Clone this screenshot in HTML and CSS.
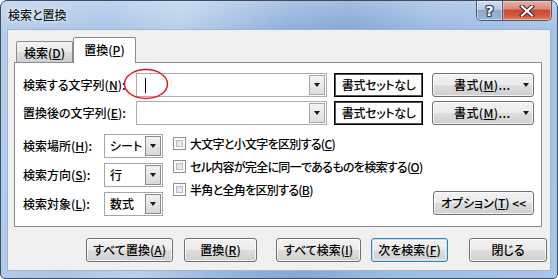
FILE: index.html
```html
<!DOCTYPE html>
<html lang="ja">
<head>
<meta charset="utf-8">
<title>検索と置換</title>
<link rel="stylesheet" href="styles.css">
</head>
<body>
<div class="window">
  <div class="titlebar">
    <span class="title">検索と置換</span>
    <div class="caption-btns">
      <div class="cap help"><span>?</span></div>
      <div class="cap close">
        <svg width="16" height="12" viewBox="0 0 16 12">
          <path d="M3 1.5 L13 10.5 M13 1.5 L3 10.5" stroke="#3a2a28" stroke-width="4.2" stroke-linecap="square" fill="none"/>
          <path d="M3 1.5 L13 10.5 M13 1.5 L3 10.5" stroke="#ffffff" stroke-width="2.2" stroke-linecap="square" fill="none"/>
        </svg>
      </div>
    </div>
  </div>
  <div class="client">
    <div class="tabs">
      <div class="tab">検索(<u>D</u>)</div>
      <div class="tab active">置換(<u>P</u>)</div>
    </div>
    <div class="panel">
      <div class="rows">
        <div class="row">
          <span class="lbl">検索する文字列(<u>N</u>):</span>
          <div class="combo">
            <div class="field"><span class="caret"></span></div>
            <div class="drop"><i class="tri"></i></div>
          </div>
          <div class="fmtbox">書式セットなし</div>
          <div class="btn fmtbtn"><span class="fmtlbl">書式(<u>M</u>)...</span><i class="tri"></i></div>
        </div>
        <div class="row">
          <span class="lbl">置換後の文字列(<u>E</u>):</span>
          <div class="combo">
            <div class="field"></div>
            <div class="drop"><i class="tri"></i></div>
          </div>
          <div class="fmtbox">書式セットなし</div>
          <div class="btn fmtbtn"><span class="fmtlbl">書式(<u>M</u>)...</span><i class="tri"></i></div>
        </div>
      </div>
      <div class="options">
        <div class="scopes">
          <div class="scope"><span class="slbl">検索場所(<u>H</u>):</span><div class="select"><span class="sval">シート</span><span class="sdrop"><i class="tri"></i></span></div></div>
          <div class="scope"><span class="slbl">検索方向(<u>S</u>):</span><div class="select"><span class="sval">行</span><span class="sdrop"><i class="tri"></i></span></div></div>
          <div class="scope"><span class="slbl">検索対象(<u>L</u>):</span><div class="select"><span class="sval">数式</span><span class="sdrop"><i class="tri"></i></span></div></div>
        </div>
        <div class="checks">
          <div class="check"><span class="box"></span><span>大文字と小文字を区別する(<u>C</u>)</span></div>
          <div class="check"><span class="box"></span><span>セル内容が完全に同一であるものを検索する(<u>O</u>)</span></div>
          <div class="check"><span class="box"></span><span>半角と全角を区別する(<u>B</u>)</span></div>
        </div>
        <div class="optside"><div class="btn optbtn">オプション(<u>T</u>) &lt;&lt;</div></div>
      </div>
    </div>
    <div class="actions">
      <div class="btn act act-all">すべて置換(<u>A</u>)</div>
      <div class="btn act act-rep">置換(<u>R</u>)</div>
      <div class="btn act act-findall">すべて検索(<u>I</u>)</div>
      <div class="btn act act-next default">次を検索(<u>F</u>)</div>
      <div class="btn act act-close">閉じる</div>
    </div>
  </div>
  <svg class="annot" width="46" height="32" viewBox="0 0 46 32">
    <ellipse cx="23" cy="16" rx="21.5" ry="14.5" fill="none" stroke="#e8141c" stroke-width="1.5"/>
  </svg>
</div>
</body>
</html>
```

FILE: styles.css
```css
* { box-sizing: border-box; margin: 0; padding: 0; }
html, body { width: 558px; height: 279px; overflow: hidden; }
body {
  font-family: "Noto Sans CJK JP", "Meiryo UI", sans-serif;
  font-size: 12px;
  font-weight: 500;
  color: #000;
  font-feature-settings: "palt";
  background: #ffffff;
  white-space: nowrap;
}
u { text-decoration: underline; text-underline-offset: 1px; text-decoration-thickness: 1px; }

.window {
  position: relative;
  width: 558px;
  height: 279px;
  border: 1px solid #3c4d63;
  border-radius: 7px 7px 5px 5px;
  background:
    linear-gradient(to bottom, rgba(255,255,255,0.25), rgba(255,255,255,0) 28px),
    linear-gradient(100deg, #b7cfea 0%, #aac6e8 18%, #b9d1ec 30%, #90b1dc 48%, #86a8d6 58%, #9dbce3 72%, #a9c6e9 100%);
  display: flex;
  flex-direction: column;
  overflow: hidden;
}

.titlebar {
  height: 28px;
  display: flex;
  align-items: flex-start;
  padding-left: 7px;
}
.title {
  line-height: 1;
  margin-top: 8px;
  font-size: 12px;
  color: #101820;
  text-shadow: 0 0 5px rgba(255,255,255,0.9), 0 0 2px rgba(255,255,255,0.9);
}
.caption-btns {
  margin-left: auto;
  margin-right: 5px;
  display: flex;
  height: 20px;
  border: 1px solid #4a5a70;
  border-top: none;
  border-radius: 0 0 5px 5px;
  overflow: hidden;
}
.cap {
  height: 19px;
  display: flex;
  align-items: center;
  justify-content: center;
}
.help {
  width: 26px;
  border-right: 1px solid #4a5a70;
  background: linear-gradient(#d3e0ef 0%, #b3c7e0 45%, #8ea9cd 50%, #9cb5d6 100%);
  box-shadow: inset 0 0 0 1px rgba(255,255,255,0.45);
}
.help span {
  font-family: "DejaVu Sans", sans-serif;
  font-weight: bold;
  font-size: 14px;
  line-height: 1;
  color: #fff;
  text-shadow: -1px 0 #34445a, 1px 0 #34445a, 0 -1px #34445a, 0 1px #34445a, 1px 1px #34445a, -1px -1px #34445a, 1px -1px #34445a, -1px 1px #34445a;
}
.close {
  width: 48px;
  background: linear-gradient(#eab1a6 0%, #db8a7b 40%, #c94a36 50%, #d15a42 80%, #e48a6e 100%);
  box-shadow: inset 0 0 0 1px rgba(255,220,210,0.45);
}

.client {
  margin: 0 6px;
  height: 242px;
  border: 1px solid #a3b4ca;
  background: #f0f0f0;
  display: flex;
  flex-direction: column;
}

.tabs {
  display: flex;
  align-items: flex-end;
  height: 25px;
  margin-top: 7px;
  margin-left: 8px;
}
.tab {
  height: 21px;
  width: 57px;
  border: 1px solid #898c95;
  border-bottom: none;
  border-radius: 2px 2px 0 0;
  background: linear-gradient(#f3f3f3 0%, #ebebeb 45%, #dddddd 50%, #cfcfcf 100%);
  display: flex;
  align-items: center;
  justify-content: center;
  line-height: 1;
  padding-top: 1px;
}
.tab.active {
  width: 63px;
  height: 26px;
  margin-bottom: -1px;
  background: #ffffff;
  position: relative;
  z-index: 1;
  padding-top: 0;
  padding-bottom: 2px;
}

.panel {
  margin-left: 6px;
  width: 528px;
  height: 165px;
  border: 1px solid #898c95;
  background: #ffffff;
  padding: 10px 7px 0 8px;
  display: flex;
  flex-direction: column;
}
.rows { display: flex; flex-direction: column; gap: 4px; }
.row { display: flex; align-items: center; height: 24px; }
.lbl { width: 113px; line-height: 1; flex-shrink: 0; }
.combo {
  width: 192px;
  height: 24px;
  border: 1px solid #abadb3;
  background: #fff;
  display: flex;
  padding: 1px;
}
.field { flex: 1; display: flex; align-items: center; padding-left: 7px; }
.caret { width: 1px; height: 15px; background: #000; }
.drop {
  width: 16px;
  border: 1px solid #a7a7a7;
  background: linear-gradient(#f4f4f4, #dedede);
  display: flex;
  align-items: center;
  justify-content: center;
}
.tri {
  display: block;
  width: 0;
  height: 0;
  border-left: 3.5px solid transparent;
  border-right: 3.5px solid transparent;
  border-top: 4px solid #1a1a1a;
}
.fmtbox {
  margin-left: 7px;
  width: 89px;
  height: 24px;
  border: 1px solid #000;
  box-shadow: inset 0 0 0 1px #555;
  display: flex;
  align-items: center;
  justify-content: center;
  line-height: 1;
  background: #fff;
  letter-spacing: -0.3px;
}
.btn {
  height: 24px;
  border: 1px solid #707070;
  border-radius: 3px;
  background: linear-gradient(#f2f2f2 0%, #ebebeb 48%, #dddddd 52%, #cfcfcf 100%);
  box-shadow: inset 0 0 0 1px rgba(255,255,255,0.75);
  display: flex;
  align-items: center;
  justify-content: center;
  line-height: 1;
  flex-shrink: 0;
}
.fmtbtn {
  margin-left: 9px;
  width: 102px;
  justify-content: flex-start;
  padding-left: 21px;
}
.fmtbtn .fmtlbl { flex: 1; letter-spacing: 0.4px; }
.fmtbtn .tri { margin-right: 4px; }

.options { display: flex; margin-top: 7px; }
.scopes { display: flex; flex-direction: column; gap: 5px; padding-top: 2px; flex-shrink: 0; }
.scope { display: flex; align-items: center; height: 24px; }
.slbl { width: 81px; line-height: 1; }
.select {
  width: 59px;
  height: 24px;
  border: 1px solid #a5a5a5;
  background: #fff;
  display: flex;
  padding: 1px;
}
.sval { flex: 1; display: flex; align-items: center; padding-left: 4px; line-height: 1; }
.sdrop {
  width: 16px;
  border: 1px solid #8c8c8c;
  background: linear-gradient(#f2f2f2, #d8d8d8);
  display: flex;
  align-items: center;
  justify-content: center;
}
.checks { margin-left: 10px; display: flex; flex-direction: column; flex-shrink: 0; }
.check { height: 23px; display: flex; align-items: center; line-height: 1; letter-spacing: -0.7px; }
.box {
  width: 13px;
  height: 13px;
  border: 1px solid #8e8f8f;
  margin-right: 4px;
  display: block;
  flex-shrink: 0;
  box-shadow: inset 0 0 0 2px #fdfdfd, inset 0 0 0 3px #b9bcc2;
  background: linear-gradient(135deg, #d6d8dc, #f6f6f6);
}
.optside { margin-left: auto; display: flex; align-items: flex-end; padding-bottom: 1px; }
.optbtn { width: 101px; }

.actions { display: flex; margin-top: 11px; padding-left: 78px; }
.act { width: 87px; }
.act-rep { margin-left: 11px; width: 73px; }
.act-findall { margin-left: 19px; width: 85px; }
.act-next { margin-left: 10px; width: 77px; }
.act-close { margin-left: 21px; width: 78px; }
.btn.default {
  border-color: #3c7fb1;
  box-shadow: inset 0 0 0 1px #b9e4f8, inset 0 0 0 2px rgba(255,255,255,0.5);
}

.annot {
  position: absolute;
  left: 122px;
  top: 67px;
}
```
